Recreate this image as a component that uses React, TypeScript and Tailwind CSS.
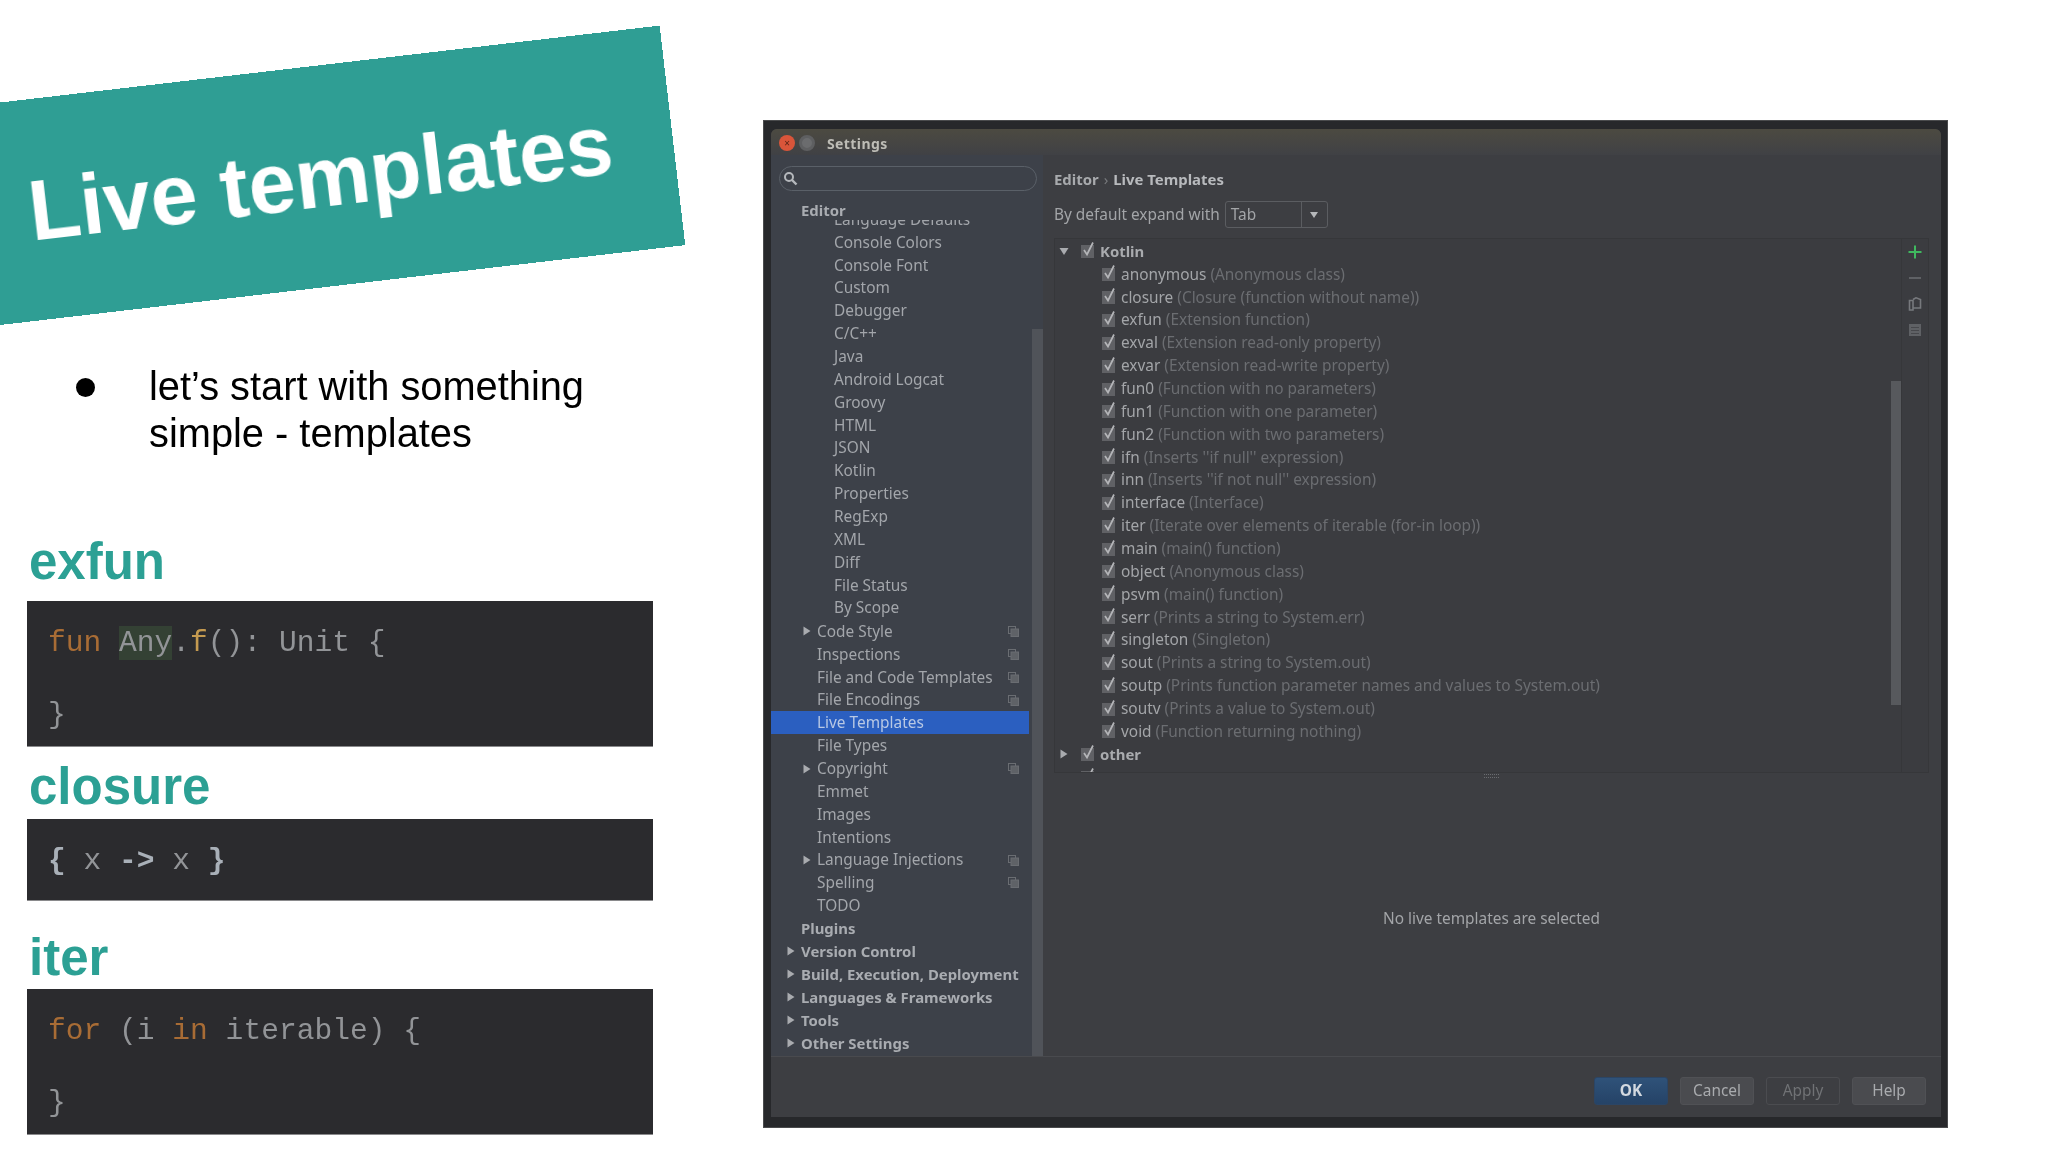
const leafNames = [
  "Console Colors",
  "Console Font",
  "Custom",
  "Debugger",
  "C/C++",
  "Java",
  "Android Logcat",
  "Groovy",
  "HTML",
  "JSON",
  "Kotlin",
  "Properties",
  "RegExp",
  "XML",
  "Diff",
  "File Status",
  "By Scope",
];

const editorItems = [
  { name: "Code Style", arrow: true, copy: true },
  { name: "Inspections", copy: true },
  { name: "File and Code Templates", copy: true },
  { name: "File Encodings", copy: true },
  { name: "Live Templates", selected: true },
  { name: "File Types" },
  { name: "Copyright", arrow: true, copy: true },
  { name: "Emmet" },
  { name: "Images" },
  { name: "Intentions" },
  { name: "Language Injections", arrow: true, copy: true },
  { name: "Spelling", copy: true },
  { name: "TODO" },
];

const sections = [
  { name: "Plugins" },
  { name: "Version Control", arrow: true },
  { name: "Build, Execution, Deployment", arrow: true },
  { name: "Languages & Frameworks", arrow: true },
  { name: "Tools", arrow: true },
  { name: "Other Settings", arrow: true },
];

const templates = [
  ["anonymous", "(Anonymous class)"],
  ["closure", "(Closure (function without name))"],
  ["exfun", "(Extension function)"],
  ["exval", "(Extension read-only property)"],
  ["exvar", "(Extension read-write property)"],
  ["fun0", "(Function with no parameters)"],
  ["fun1", "(Function with one parameter)"],
  ["fun2", "(Function with two parameters)"],
  ["ifn", "(Inserts ''if null'' expression)"],
  ["inn", "(Inserts ''if not null'' expression)"],
  ["interface", "(Interface)"],
  ["iter", "(Iterate over elements of iterable (for-in loop))"],
  ["main", "(main() function)"],
  ["object", "(Anonymous class)"],
  ["psvm", "(main() function)"],
  ["serr", "(Prints a string to System.err)"],
  ["singleton", "(Singleton)"],
  ["sout", "(Prints a string to System.out)"],
  ["soutp", "(Prints function parameter names and values to System.out)"],
  ["soutv", "(Prints a value to System.out)"],
  ["void", "(Function returning nothing)"],
];

function Arrow({ down, className }: { down?: boolean; className?: string }) {
  return (
    <svg width="10" height="10" viewBox="0 0 10 10" className={className}>
      {down ? <path d="M0.5 2 L9.5 2 L5 9 Z" fill="#a9abaf" /> : <path d="M1.5 0.5 L8.5 5 L1.5 9.5 Z" fill="#a9abaf" />}
    </svg>
  );
}

function Check() {
  return (
    <svg width="16" height="18" viewBox="0 0 16 18" className="shrink-0">
      <rect x="1" y="3" width="13" height="13" fill="#606165" />
      <path d="M4 8 L7 12.5 L13 0.5" fill="none" stroke="#b4b5b8" strokeWidth="1.7" />
    </svg>
  );
}

function CopyMark() {
  return (
    <svg width="11" height="11" viewBox="0 0 11 11" className="shrink-0">
      <rect x="0.5" y="0.5" width="7" height="7" fill="none" stroke="#6a6d72" />
      <rect x="3" y="3" width="7.5" height="7.5" fill="#5f6267" stroke="#6a6d72" />
    </svg>
  );
}

function NavRow({ name, arrow, copy, selected }: { name: string; arrow?: boolean; copy?: boolean; selected?: boolean }) {
  return (
    <div className={`h-[22.87px] flex items-center pl-[46px] pr-[10px] text-[15.4px] ${selected ? "bg-[#2b5fc0] text-[#b8c8e4]" : "text-[#a3a6ab]"}`}>
      {arrow && <Arrow className="-ml-[15px] mr-[5px]" />}
      <span className="flex-1 whitespace-nowrap">{name}</span>
      {copy && <CopyMark />}
    </div>
  );
}

function CodeBlock({ short, children }: { short?: boolean; children: React.ReactNode }) {
  return (
    <div className={`w-[626px] ${short ? "h-[82px]" : "h-[146px]"} bg-[#2b2b2e] pt-[24px] pl-[21px] font-['Liberation_Mono',monospace] text-[29.6px] leading-[36px] text-[#929497] whitespace-pre border-b border-[#8a8a8c]`}>
      {children}
    </div>
  );
}

function Heading({ children }: { children: React.ReactNode }) {
  return <h2 className="h-[60px] pl-[29px] text-[51px] leading-[60px] font-bold text-[#2ca094]">{children}</h2>;
}

function SlidePanel() {
  return (
    <div className="w-[763px] shrink-0 blur-[0.4px] font-['Liberation_Sans',sans-serif]">
      <div className="-ml-[87px] mt-[69px] w-[762px] h-[221px] -rotate-[6.65deg] bg-[#2f9e94] pl-[114px] pt-[70px] text-[84.5px] leading-none font-bold text-white whitespace-nowrap">
        Live templates
      </div>
      <div className="mt-[73px] flex text-[39.8px] leading-[47px] text-black">
        <span className="ml-[76px] mt-[15px] w-[19px] h-[19px] rounded-full bg-black shrink-0" />
        <p className="ml-[54px]">
          let’s start with something
          <br />
          simple - templates
        </p>
      </div>
      <div className="mt-[75px]">
        <Heading>exfun</Heading>
      </div>
      <div className="mt-[9px] ml-[27px]">
        <CodeBlock>
          <span className="text-[#a86c35]">fun</span> <span className="bg-[#344134]">Any</span>.<span className="text-[#c49a50]">f</span>(): Unit {"{"}
          {"\n\n"}
          {"}"}
        </CodeBlock>
      </div>
      <div className="mt-[10px]">
        <Heading>closure</Heading>
      </div>
      <div className="mt-[2px] ml-[27px]">
        <CodeBlock short>
          <b className="text-[#a9b0b8]">{"{"}</b> x <b className="text-[#a9b0b8]">{"->"}</b> x <b className="text-[#a9b0b8]">{"}"}</b>
        </CodeBlock>
      </div>
      <div className="mt-[27px]">
        <Heading>iter</Heading>
      </div>
      <div className="mt-[1px] ml-[27px]">
        <CodeBlock>
          <span className="text-[#a86c35]">for</span> (i <span className="text-[#a86c35]">in</span> iterable) {"{"}
          {"\n\n"}
          {"}"}
        </CodeBlock>
      </div>
    </div>
  );
}

function Sidebar() {
  return (
    <div className="w-[272px] shrink-0 flex bg-[#3d4149]">
      <div className="w-[258px] shrink-0 pt-[11px]">
        <div className="ml-[8px] w-[258px] h-[25px] rounded-full border border-[#5a6068] flex items-center pl-[3px]">
          <svg width="15" height="15" viewBox="0 0 15 15">
            <circle cx="6" cy="6" r="4" fill="none" stroke="#b5b8bc" strokeWidth="2" />
            <path d="M9 9 L13.5 13.5" stroke="#b5b8bc" strokeWidth="2.4" />
          </svg>
        </div>
        <div className="mt-[8px] h-[21px] pl-[30px] text-[14.9px] leading-[22px] font-bold text-[#a9acb1]">Editor</div>
        <div className="h-[400px] overflow-hidden">
          <div className="-mt-[12px]">
            <div className="h-[22.87px] flex items-center pl-[63px] text-[15.4px] text-[#a3a6ab]">Language Defaults</div>
            {leafNames.map((n) => (
              <div key={n} className="h-[22.87px] flex items-center pl-[63px] text-[15.4px] text-[#a3a6ab]">
                {n}
              </div>
            ))}
          </div>
        </div>
        {editorItems.map((item) => (
          <NavRow key={item.name} {...item} />
        ))}
        {sections.map((s) => (
          <div key={s.name} className="h-[22.87px] flex items-center pl-[30px] text-[14.9px] font-bold text-[#a9acb1] whitespace-nowrap">
            {s.arrow && <Arrow className="-ml-[15px] mr-[5px]" />}
            {s.name}
          </div>
        ))}
      </div>
      <div className="ml-[3px] w-[11px] pt-[174px] flex">
        <div className="w-full bg-[#505359]" />
      </div>
    </div>
  );
}

function TemplateTree() {
  return (
    <div className="w-[875px] h-[535px] flex border border-[#36373a] bg-[#3b3c40] overflow-hidden">
      <div className="flex-1 pt-[1px] text-[15.4px]">
        <div className="h-[22.87px] flex items-center pl-[4px]">
          <Arrow down />
          <span className="ml-[11px]"><Check /></span>
          <b className="ml-[4px] text-[14.9px] text-[#a9abae]">Kotlin</b>
        </div>
        {templates.map(([name, desc]) => (
          <div key={name} className="h-[22.87px] flex items-center pl-[46px] whitespace-nowrap">
            <Check />
            <span className="ml-[4px] text-[#a3a5a8]">{name}</span>
            <span className="ml-[4px] text-[#6b6d71]">{desc}</span>
          </div>
        ))}
        <div className="h-[22.87px] flex items-center pl-[4px]">
          <Arrow />
          <span className="ml-[11px]"><Check /></span>
          <b className="ml-[4px] text-[14.9px] text-[#a9abae]">other</b>
        </div>
        <div className="h-[22.87px] flex items-center pl-[25px]">
          <Check />
        </div>
      </div>
      <div className="w-[10px] pt-[142px]">
        <div className="h-[324px] bg-[#57595d]" />
      </div>
      <div className="w-[27px] border-l border-[#36373a] flex flex-col items-center pt-[6px] gap-[12px]">
        <svg width="14" height="14" viewBox="0 0 14 14">
          <path d="M7 0.5 V13.5 M0.5 7 H13.5" stroke="#3fb95f" strokeWidth="2" />
        </svg>
        <svg width="14" height="14" viewBox="0 0 14 14">
          <path d="M1 7 H13" stroke="#5f6165" strokeWidth="2" />
        </svg>
        <svg width="14" height="14" viewBox="0 0 14 14">
          <path d="M1.5 3.5 H5 V13 H1.5 Z M5 2.5 L8 0.8 L12.5 2.5 V11 H5" fill="none" stroke="#77797d" strokeWidth="1.6" />
        </svg>
        <svg width="14" height="14" viewBox="0 0 14 14">
          <rect x="1" y="1" width="12" height="12" fill="#5f6165" />
          <path d="M3 4.5 H11 M3 7.5 H11 M3 10.5 H11" stroke="#47484c" />
        </svg>
      </div>
    </div>
  );
}

function DialogButton({ label, className }: { label: string; className: string }) {
  return <div className={`w-[74px] h-[28px] rounded-[3px] border flex items-center justify-center text-[15.4px] ${className}`}>{label}</div>;
}

function SettingsDialog() {
  return (
    <div className="mt-[120px] w-[1185px] h-[1008px] bg-[#27282b] border border-[#4a4b4d] pt-[8px] pl-[7px] pr-[6px] pb-[10px] blur-[0.6px] font-['Noto_Sans',sans-serif]">
      <div className="h-full rounded-t-[6px] bg-[#3d3e42] flex flex-col">
        <div className="h-[26px] shrink-0 rounded-t-[6px] bg-gradient-to-b from-[#4c4a41] to-[#404145] flex items-center pl-[8px] pt-[2px]">
          <span className="w-[16px] h-[16px] rounded-full bg-[#d9553a] text-[10px] leading-[16px] text-center text-[#5a2416]">×</span>
          <span className="ml-[4px] w-[16px] h-[16px] rounded-full bg-[#6b6c6e] border-[3px] border-[#5e5f61]" />
          <span className="ml-[12px] text-[14px] font-bold tracking-[0.4px] text-[#bdbcb6]">Settings</span>
        </div>
        <div className="flex-1 flex min-h-0">
          <Sidebar />
          <div className="flex-1 pl-[11px] flex flex-col">
            <div className="mt-[14px] h-[20px] flex items-center text-[14.9px] font-bold text-[#a8aaad]">
              Editor
              <span className="mx-[5px] font-normal text-[#77797c]">›</span>
              <span className="text-[#b8babd]">Live Templates</span>
            </div>
            <div className="mt-[12px] h-[27px] flex items-center text-[15.4px] text-[#a3a5a8]">
              By default expand with
              <div className="ml-[5px] w-[103px] h-[27px] rounded-[3px] border border-[#5b5d61] flex items-center pl-[5px]">
                <span className="flex-1">Tab</span>
                <span className="w-[26px] h-full border-l border-[#5b5d61] flex items-center justify-center">
                  <svg width="10" height="8" viewBox="0 0 10 8">
                    <path d="M1 1 H9 L5 7 Z" fill="#b5b7ba" />
                  </svg>
                </span>
              </div>
            </div>
            <div className="mt-[10px]">
              <TemplateTree />
            </div>
            <div className="flex-1 relative flex items-center justify-center pt-[8px] pr-[12px] text-[15.4px] text-[#a3a5a8]">
              <span className="absolute top-[1px] left-[430px] w-[15px] h-[4px] border-y border-dotted border-[#6a6c70]" />
              No live templates are selected
            </div>
          </div>
        </div>
        <div className="h-[61px] shrink-0 border-t border-[#494a4e] flex justify-end gap-[12px] pt-[20px] pr-[15px]">
          <DialogButton label="OK" className="border-[#2b4565] bg-gradient-to-b from-[#2f5279] to-[#254367] font-bold text-[#d3d9e0]" />
          <DialogButton label="Cancel" className="border-[#505155] bg-[#4a4b4f] text-[#a9abae]" />
          <DialogButton label="Apply" className="border-[#4b4c50] bg-[#3d3e42] text-[#707275]" />
          <DialogButton label="Help" className="border-[#505155] bg-[#4a4b4f] text-[#a9abae]" />
        </div>
      </div>
    </div>
  );
}

export default function App() {
  return (
    <div className="w-[2048px] h-[1152px] overflow-hidden bg-white flex">
      <SlidePanel />
      <SettingsDialog />
    </div>
  );
}
